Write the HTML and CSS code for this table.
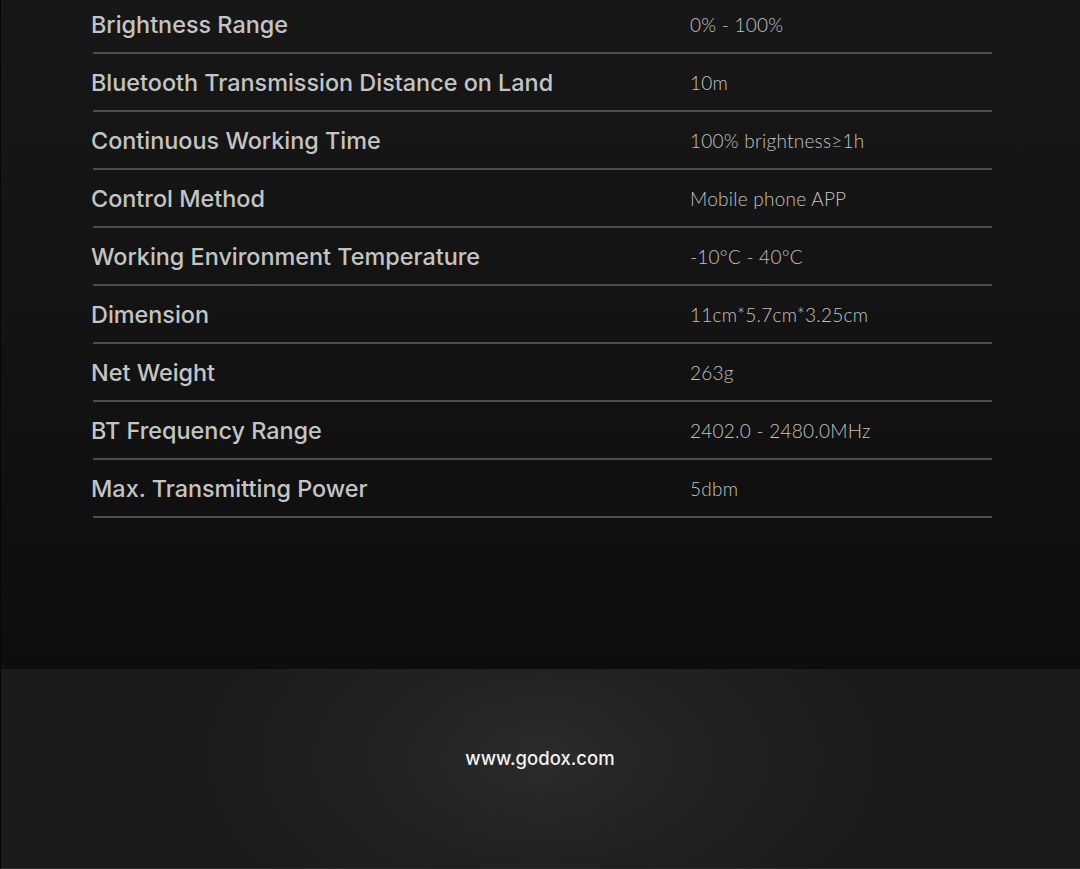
FILE: index.html
```html
<!DOCTYPE html>
<html>
<head>
<meta charset="utf-8">
<link rel="stylesheet" href="styles.css">
</head>
<body>
<div class="page">
  <section class="specs">
    <div class="list">
      <div class="row"><span class="label">Brightness Range</span><span class="value">0% - 100%</span></div>
      <div class="row"><span class="label">Bluetooth Transmission Distance on Land</span><span class="value">10m</span></div>
      <div class="row"><span class="label">Continuous Working Time</span><span class="value">100% brightness≥1h</span></div>
      <div class="row"><span class="label">Control Method</span><span class="value">Mobile phone APP</span></div>
      <div class="row"><span class="label">Working Environment Temperature</span><span class="value">-10°C - 40°C</span></div>
      <div class="row"><span class="label">Dimension</span><span class="value">11cm*5.7cm*3.25cm</span></div>
      <div class="row"><span class="label">Net Weight</span><span class="value">263g</span></div>
      <div class="row"><span class="label">BT Frequency Range</span><span class="value">2402.0 - 2480.0MHz</span></div>
      <div class="row"><span class="label">Max. Transmitting Power</span><span class="value">5dbm</span></div>
    </div>
  </section>
  <footer class="footer">
    <span class="site">www.godox.com</span>
  </footer>
</div>
</body>
</html>
```
FILE: styles.css
```css
html, body {
  margin: 0;
  padding: 0;
  background: #0d0d0d;
}
.page {
  width: 1080px;
  height: 869px;
  overflow: hidden;
  border-left: 1px solid #060606;
  border-bottom: 1px solid #2a2a2a;
  box-sizing: border-box;
  font-family: "Lato", "Open Sans", sans-serif;
}
.specs {
  height: 669px;
  box-sizing: border-box;
  background: linear-gradient(180deg, #171717 0%, #131313 50%, #0d0d0d 100%);
  padding-left: 90px;
  overflow: hidden;
}
.list {
  width: 901px;
  margin-top: -4px;
}
.row {
  display: flex;
  align-items: center;
  height: 56px;
  border-bottom: 2px solid #4d4d4d;
  margin-left: 2px;
}
.label {
  width: 599px;
  margin-left: -2px;
  font-family: "Inter", "Lato", sans-serif;
  font-size: 23.4px;
  font-weight: 500;
  color: #c4c4c4;
}
.value {
  font-size: 19px;
  font-weight: 300;
  color: #c2c2c2;
  letter-spacing: 0.25px;
}
.footer {
  height: 199px;
  display: flex;
  justify-content: center;
  align-items: flex-start;
  padding-top: 78px;
  box-sizing: border-box;
  background: radial-gradient(ellipse 340px 200px at 50% 45%, #2b2b2b 0%, #222222 45%, #1b1b1b 100%);
}
.site {
  font-family: "Inter", "Lato", sans-serif;
  font-size: 18.5px;
  font-weight: 500;
  color: #f2f2f2;
  margin-left: -1px;
}
```
